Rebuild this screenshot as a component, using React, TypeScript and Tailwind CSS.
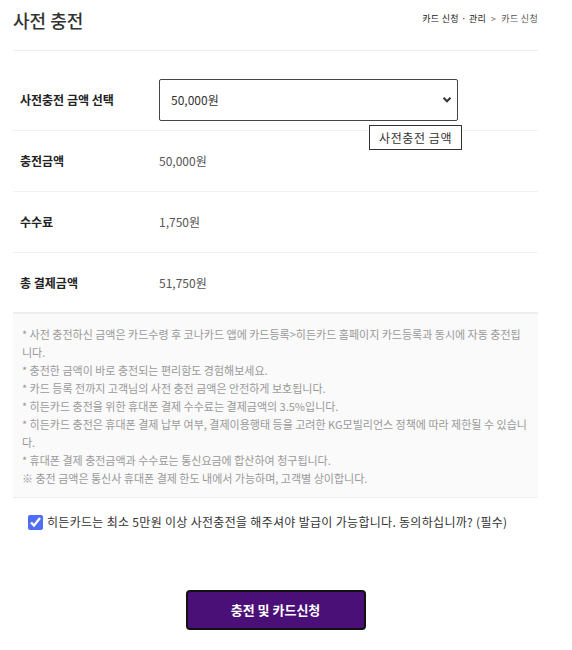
import { useState } from 'react';

const rows = [
  { label: '충전금액', value: '50,000원' },
  { label: '수수료', value: '1,750원' },
  { label: '총 결제금액', value: '51,750원' },
];

const notes = [
  '* 사전 충전하신 금액은 카드수령 후 코나카드 앱에 카드등록>히든카드 홈페이지 카드등록과 동시에 자동 충전됩니다.',
  '* 충전한 금액이 바로 충전되는 편리함도 경험해보세요.',
  '* 카드 등록 전까지 고객님의 사전 충전 금액은 안전하게 보호됩니다.',
  '* 히든카드 충전을 위한 휴대폰 결제 수수료는 결제금액의 3.5%입니다.',
  '* 히든카드 충전은 휴대폰 결제 납부 여부, 결제이용행태 등을 고려한 KG모빌리언스 정책에 따라 제한될 수 있습니다.',
  '* 휴대폰 결제 충전금액과 수수료는 통신요금에 합산하여 청구됩니다.',
  '※ 충전 금액은 통신사 휴대폰 결제 한도 내에서 가능하며, 고객별 상이합니다.',
];

export default function App() {
  const [amount, setAmount] = useState('50000');
  const [agree, setAgree] = useState(true);

  return (
    <div className="w-[572px] min-h-[650px] bg-white text-[#333]" style={{ fontFamily: '"Noto Sans CJK KR", "Noto Sans", sans-serif' }}>
      <div className="ml-[13px] w-[525px]">
        {/* header */}
        <div className="flex justify-between items-start h-[51px] border-b border-[#eee]">
          <h1 className="mt-[7px] text-[18px] leading-[26px] font-medium text-[#333]">사전 충전</h1>
          <div className="mt-[12px] text-[9px] leading-[14px] text-[#222] flex items-center gap-[5px] tracking-[0.3px]">
            <span>카드 신청 · 관리</span>
            <span className="text-[#666]">&gt;</span>
            <span className="text-[#555]">카드 신청</span>
          </div>
        </div>

        {/* form rows */}
        <div className="mt-[19px]">
          <div className="relative flex items-center h-[61px] border-b border-[#f0f0f0]">
            <div className="w-[146px] pl-[7px] text-[12px] font-bold text-[#222]">사전충전 금액 선택</div>
            <div className="relative w-[299px] h-[42px]">
              <select
                value={amount}
                onChange={(e) => setAmount(e.target.value)}
                className="appearance-none w-full h-full border border-[#444] rounded-[2px] pl-[11px] text-[12px] text-[#333] bg-white outline-none"
              >
                <option value="50000">50,000원</option>
                <option value="100000">100,000원</option>
              </select>
              <svg className="absolute right-[6px] top-[17px] w-[10px] h-[8px] pointer-events-none" viewBox="0 0 10 8">
                <path d="M1.5 1.8 L5 5.3 L8.5 1.8" fill="none" stroke="#333" strokeWidth="2" />
              </svg>
            </div>
            <div className="absolute left-[356px] top-[55px] border border-[#333] bg-white px-[9px] h-[25px] flex items-center text-[12px] tracking-[0.6px] text-[#333] whitespace-nowrap z-10">
              사전충전 금액
            </div>
          </div>
          {rows.map((r, i) => (
            <div
              key={r.label}
              className={`flex items-center h-[61px] ${i === rows.length - 1 ? 'border-b-2 border-[#eee]' : 'border-b border-[#f0f0f0]'}`}
            >
              <div className="w-[146px] pl-[7px] text-[12px] font-bold text-[#222]">{r.label}</div>
              <div className="text-[12px] text-[#555]">{r.value}</div>
            </div>
          ))}
        </div>

        {/* notes */}
        <div className="bg-[#fafafa] border-b border-[#eee] pl-[9px] pr-[9px] pt-[11px] pb-[10px] text-[11px] leading-[18px] text-[#999]">
          {notes.map((n) => (
            <p key={n}>{n}</p>
          ))}
        </div>

        {/* agree */}
        <label className="flex items-center gap-[4px] mt-[15px] ml-[15px] text-[12px] tracking-[0.3px] text-[#333] cursor-pointer">
          <input
            type="checkbox"
            checked={agree}
            onChange={(e) => setAgree(e.target.checked)}
            className="w-[15px] h-[15px] accent-[#4f6df5]"
          />
          <span>히든카드는 최소 5만원 이상 사전충전을 해주셔야 발급이 가능합니다. 동의하십니까? (필수)</span>
        </label>

        <div className="flex justify-center mt-[59px] pb-[20px]">
          <button className="w-[180px] h-[40px] bg-[#4b0f78] border-2 border-[#111] rounded-[4px] text-white text-[13px] font-bold">
            충전 및 카드신청
          </button>
        </div>
      </div>
    </div>
  );
}
